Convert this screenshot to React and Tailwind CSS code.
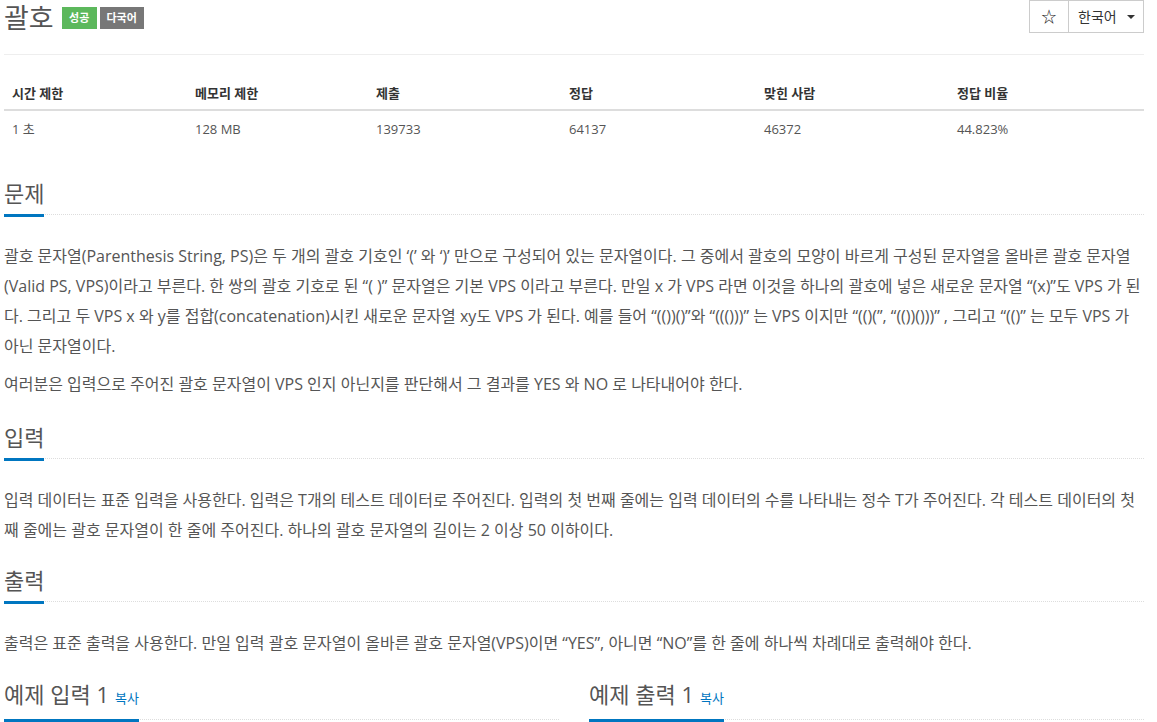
import React from "react";

// 문제 페이지: 괄호 (BOJ 스타일)

const stats = [
    { label: "시간 제한", value: "1 초", w: "w-[183px]" },
    { label: "메모리 제한", value: "128 MB", w: "w-[181px]" },
    { label: "제출", value: "139733", w: "w-[193px]" },
    { label: "정답", value: "64137", w: "w-[195px]" },
    { label: "맞힌 사람", value: "46372", w: "w-[193px]" },
    { label: "정답 비율", value: "44.823%", w: "w-[195px]" },
];

function Headline({ children, extra }) {
    return (
        <div className="flex border-b border-dotted border-[#ddd]">
            <h2 className="-mb-[3px] flex items-baseline border-b-[3px] border-[#0076C0] pb-[7px] text-[22px] leading-[28px] text-[#555]">
                {children}
                {extra && <a className="ml-[6px] text-[13px] text-[#0076C0]">{extra}</a>}
            </h2>
        </div>
    );
}

function Section({ title, children, className = "" }) {
    return (
        <section className={className}>
            <Headline>{title}</Headline>
            <div className="mt-[26px] text-[16px] leading-[30px] text-[#555]">{children}</div>
        </section>
    );
}

export default function App() {
    return (
        <div className="min-h-screen bg-white font-['Open_Sans','Noto_Sans_CJK_KR',sans-serif]">
            <div className="ml-[4px] w-[1140px]">
                {/* ==================== TITLE ==================== */}
                <div className="flex h-[36px] items-center justify-between">
                    <div className="flex items-center">
                        <h1 className="text-[27px] leading-[36px] text-[#555]">괄호</h1>
                        <span className="ml-[8px] flex h-[22px] w-[35px] items-center justify-center bg-[#5cb85c] text-[11px] font-bold text-white">
                            성공
                        </span>
                        <span className="ml-[3px] flex h-[22px] w-[44px] items-center justify-center bg-[#777] text-[11px] font-bold text-white">
                            다국어
                        </span>
                    </div>
                    <div className="flex self-start border border-[#ccc]">
                        <button className="flex h-[31px] w-[38px] items-center justify-center text-[15px] text-[#222] font-['Noto_Sans_CJK_KR',sans-serif]">
                            ☆
                        </button>
                        <button className="flex h-[31px] w-[75px] items-center gap-[10px] border-l border-[#ccc] pl-[9px] text-[14px] text-[#333]">
                            한국어
                            <span className="h-0 w-0 border-x-[4px] border-t-[4px] border-x-transparent border-t-[#333]" />
                        </button>
                    </div>
                </div>

                <div className="mt-[18px] h-px bg-[#eee]" />

                {/* ==================== STATS TABLE ==================== */}
                <table className="mt-[20px] w-full border-collapse text-left text-[13px]">
                    <thead>
                        <tr className="border-b-2 border-[#ddd]">
                            {stats.map((s) => (
                                <th key={s.label} className={`${s.w} px-[8px] pt-[8px] pb-[6px] leading-[20px] font-bold text-[#333]`}>
                                    {s.label}
                                </th>
                            ))}
                        </tr>
                    </thead>
                    <tbody>
                        <tr>
                            {stats.map((s) => (
                                <td key={s.label} className="p-[8px] leading-[20px] text-[#555]">
                                    {s.value}
                                </td>
                            ))}
                        </tr>
                    </tbody>
                </table>

                {/* ==================== 문제 ==================== */}
                <Section title="문제" className="mt-[32px]">
                    <p className="mb-[8px]">
                        괄호 문자열(Parenthesis String, PS)은 두 개의 괄호 기호인 ‘(’ 와 ‘)’ 만으로 구성되어 있는 문자열이다. 그 중에서
                        괄호의 모양이 바르게 구성된 문자열을 올바른 괄호 문자열(Valid PS, VPS)이라고 부른다. 한 쌍의 괄호 기호로 된 “( )”
                        문자열은 기본 VPS 이라고 부른다. 만일 x 가 VPS 라면 이것을 하나의 괄호에 넣은 새로운 문자열 “(x)”도 VPS 가
                        된다. 그리고 두 VPS x 와 y를 접합(concatenation)시킨 새로운 문자열 xy도 VPS 가 된다. 예를 들어 “(())()”와
                        “((()))” 는 VPS 이지만 “(()(”, “(())()))” , 그리고 “(()” 는 모두 VPS 가 아닌 문자열이다.
                    </p>
                    <p>여러분은 입력으로 주어진 괄호 문자열이 VPS 인지 아닌지를 판단해서 그 결과를 YES 와 NO 로 나타내어야 한다.</p>
                </Section>

                {/* ==================== 입력 ==================== */}
                <Section title="입력" className="mt-[24px]">
                    <p>
                        입력 데이터는 표준 입력을 사용한다. 입력은 T개의 테스트 데이터로 주어진다. 입력의 첫 번째 줄에는 입력 데이터의
                        수를 나타내는 정수 T가 주어진다. 각 테스트 데이터의 첫째 줄에는 괄호 문자열이 한 줄에 주어진다. 하나의 괄호
                        문자열의 길이는 2 이상 50 이하이다.
                    </p>
                </Section>

                {/* ==================== 출력 ==================== */}
                <Section title="출력" className="mt-[21px]">
                    <p>
                        출력은 표준 출력을 사용한다. 만일 입력 괄호 문자열이 올바른 괄호 문자열(VPS)이면 “YES”, 아니면 “NO”를 한 줄에
                        하나씩 차례대로 출력해야 한다.
                    </p>
                </Section>

                {/* ==================== 예제 ==================== */}
                <div className="mt-[22px] grid grid-cols-2 gap-[30px]">
                    <section>
                        <Headline extra="복사">예제 입력 1</Headline>
                        <pre className="mt-[20px] rounded border border-[#ccc] bg-[#f5f5f5] p-[9px] text-[13px] leading-[20px] text-[#333] font-['Liberation_Mono',monospace]">
                            {"6\n(())())\n(((()())()\n(()())((()))\n((()()(()))(((())))()\n()()()()(()()())()\n(()((())()("}
                        </pre>
                    </section>
                    <section>
                        <Headline extra="복사">예제 출력 1</Headline>
                        <pre className="mt-[20px] rounded border border-[#ccc] bg-[#f5f5f5] p-[9px] text-[13px] leading-[20px] text-[#333] font-['Liberation_Mono',monospace]">
                            {"NO\nNO\nYES\nNO\nYES\nNO"}
                        </pre>
                    </section>
                </div>
            </div>
        </div>
    );
}
